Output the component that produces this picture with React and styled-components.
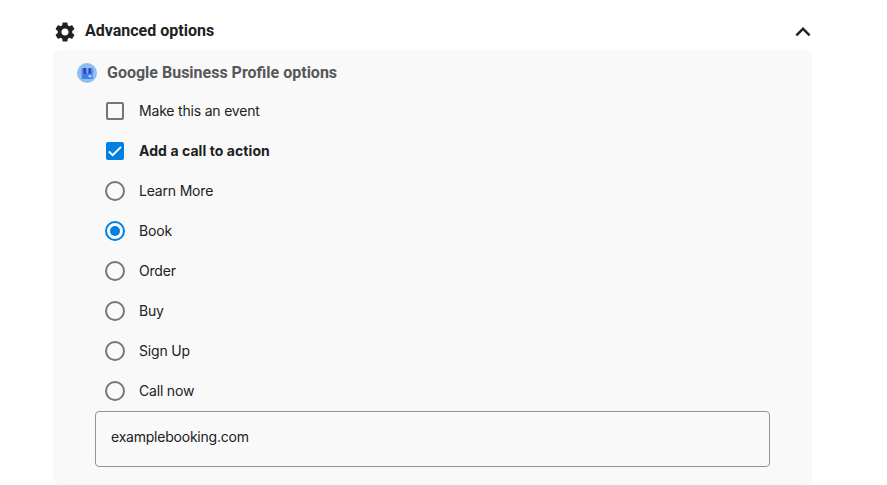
import React, { useState } from "react";
import styled, { createGlobalStyle } from "styled-components";
import { MdSettings, MdExpandLess } from "react-icons/md";

const GlobalStyle = createGlobalStyle`
  * { box-sizing: border-box; }
  body {
    margin: 0;
    background: #fff;
    color: #212121;
    font-family: Roboto, sans-serif;
    overflow: hidden;
  }
`;

const Page = styled.main`
  width: 759px;
  margin-left: 53px;
`;

const Header = styled.header`
  display: flex;
  align-items: center;
  height: 50px;
  padding: 14px 0 0;
`;

const GearIcon = styled(MdSettings)`
  width: 24px;
  height: 24px;
  color: #212121;
`;

const Title = styled.h2`
  flex: 1;
  margin: -3px 0 0 8px;
  font-size: 16px;
  line-height: 24px;
  font-weight: 700;
`;

const CollapseIcon = styled(MdExpandLess)`
  width: 30px;
  height: 30px;
  margin-right: -6px;
`;

const Panel = styled.section`
  height: 435px;
  padding: 11px 42px 0;
  border-radius: 8px;
  background: #f9f9f9;
`;

const PanelHeader = styled.div`
  display: flex;
  align-items: center;
  gap: 10px;
  height: 24px;
  margin: 0 0 6px -18px;
`;

const PanelTitle = styled.h3`
  margin: 0;
  font-size: 16px;
  line-height: 24px;
  font-weight: 700;
  color: #575757;
`;

const Option = styled.label`
  display: flex;
  align-items: center;
  height: 40px;
  padding-left: 10px;
  gap: 14px;
  font-family: Inter, sans-serif;
  font-size: 14px;
  line-height: 20px;
  font-weight: ${(p) => (p.$strong ? 700 : 400)};
  letter-spacing: ${(p) => (p.$strong ? "0.07px" : "-0.19px")};
`;

const Control = styled.input`
  appearance: none;
  display: grid;
  place-items: center;
  flex: none;
  margin: 0;
`;

const Radio = styled(Control)`
  width: 20px;
  height: 20px;
  border: 2px solid #757575;
  border-radius: 50%;

  &:checked { border-color: #0080e0; }
  &:checked::after {
    content: "";
    width: 10px;
    height: 10px;
    border-radius: 50%;
    background: #0080e0;
  }
`;

const CheckSlot = styled.span`
  display: grid;
  place-items: center;
  width: 20px;
  height: 20px;

  > * { grid-area: 1 / 1; }
`;

const Checkbox = styled(Control)`
  width: 18px;
  height: 18px;
  border: 2px solid #757575;
  border-radius: 2px;

  &:checked {
    border-color: #0080e0;
    background: #0080e0;
  }
`;

const Tick = styled.svg`
  width: 14px;
  height: 14px;
  pointer-events: none;
`;

const UrlField = styled.input`
  display: block;
  width: 675px;
  height: 56px;
  padding: 0 15px 6px;
  border: 1px solid #949494;
  border-radius: 4px;
  outline: none;
  background: transparent;
  color: #212121;
  font: 400 14px/20px Inter, sans-serif;
  letter-spacing: -0.22px;
`;

function ProfileIcon() {
  return (
    <svg width="20" height="20" viewBox="0 0 20 20" aria-hidden="true">
      <circle cx="10" cy="10" r="10" fill="#90bfef" />
      <path d="M4.8 9h10.8v6.2a.8.8 0 0 1-.8.8H5.6a.8.8 0 0 1-.8-.8z" fill="#4080ea" />
      <path d="M4.8 5h2.4v4.6a1.5 1.5 0 0 1-3 0z" fill="#5c8be6" />
      <path d="M6.4 5h3v4.6a1.5 1.5 0 0 1-3 0z" fill="#2a43b5" />
      <path d="M9.4 5h2v4.6a1 1 0 0 1-2 0z" fill="#74a7ee" />
      <path d="M11.4 5h2.4l.4 4.6a1.4 1.4 0 0 1-2.8 0z" fill="#2f48bd" />
      <path d="M13.8 5h1.6l.8 4.6a1.1 1.1 0 0 1-2 0z" fill="#5c8be6" />
      <path d="M13 11.4v3.4M11.4 13.1h3.2" fill="none" stroke="#c3dcfa" strokeWidth="1.1" />
    </svg>
  );
}

const actions = ["Learn More", "Book", "Order", "Buy", "Sign Up", "Call now"];

function CheckOption({ label, checked, onChange }) {
  return (
    <Option $strong={checked}>
      <CheckSlot>
        <Checkbox type="checkbox" checked={checked} onChange={() => onChange(!checked)} />
        {checked && (
          <Tick viewBox="0 0 14 14">
            <path d="M0.9 7.5 4.7 11.2 13 2.8" fill="none" stroke="#fff" strokeWidth="1.9" />
          </Tick>
        )}
      </CheckSlot>
      {label}
    </Option>
  );
}

export default function App() {
  const [isEvent, setIsEvent] = useState(false);
  const [hasAction, setHasAction] = useState(true);
  const [action, setAction] = useState("Book");
  const [url, setUrl] = useState("examplebooking.com");

  return (
    <>
      <GlobalStyle />
      <Page>
        <Header>
          <GearIcon />
          <Title>Advanced options</Title>
          <CollapseIcon />
        </Header>
        <Panel>
          <PanelHeader>
            <ProfileIcon />
            <PanelTitle>Google Business Profile options</PanelTitle>
          </PanelHeader>
          <CheckOption label="Make this an event" checked={isEvent} onChange={setIsEvent} />
          <CheckOption label="Add a call to action" checked={hasAction} onChange={setHasAction} />
          {actions.map((name) => (
            <Option key={name}>
              <Radio
                type="radio"
                name="action"
                checked={action === name}
                onChange={() => setAction(name)}
              />
              {name}
            </Option>
          ))}
          <UrlField
            aria-label="Booking link"
            value={url}
            onChange={(e) => setUrl(e.target.value)}
          />
        </Panel>
      </Page>
    </>
  );
}
